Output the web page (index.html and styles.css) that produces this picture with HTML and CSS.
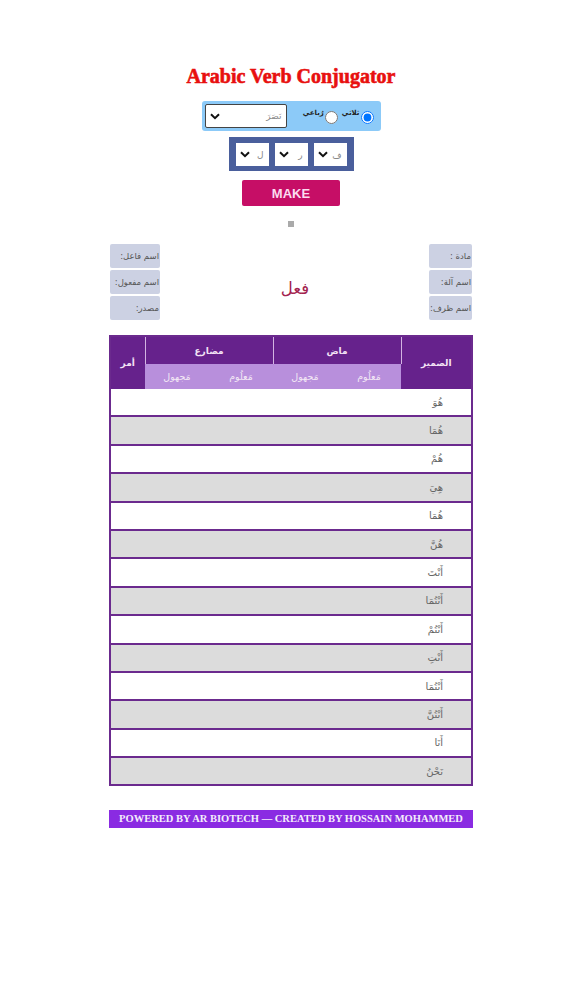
FILE: index.html
```html
<!DOCTYPE html>
<html lang="ar">
<head>
    <meta charset="UTF-8">
    <meta name="viewport" content="width=device-width, initial-scale=1.0">
    <title>Arabic Verb Conjugator</title>
    <link rel="stylesheet" href="styles.css">
</head>
<body>
    <div class="page">
        <h1 class="titre">Arabic Verb Conjugator</h1>

        <div class="bab" dir="rtl">
            <label class="choix"><input type="radio" name="nau" checked><span>ثلاثي</span></label>
            <label class="choix"><input type="radio" name="nau"><span>رُباعي</span></label>
            <select class="bab-select"><option>نَصَرَ</option></select>
        </div>

        <div class="madda" dir="rtl">
            <select class="harf"><option>ف</option></select>
            <select class="harf"><option>ر</option></select>
            <select class="harf"><option>ل</option></select>
        </div>

        <button class="make">MAKE</button>
        <div class="nuqta"></div>

        <div class="natija" dir="rtl">
            <div class="lista lista-yamin">
                <div>مادة :</div>
                <div>اسم آلة:</div>
                <div>اسم ظرف:</div>
            </div>
            <div class="fil">فعل</div>
            <div class="lista lista-yasar">
                <div>اسم فاعل:</div>
                <div>اسم مفعول:</div>
                <div>مصدر:</div>
            </div>
        </div>

        <table class="jadwal" dir="rtl">
            <colgroup>
                <col class="col-damir">
                <col class="col-fil">
                <col class="col-fil">
                <col class="col-fil">
                <col class="col-fil">
                <col class="col-amr">
            </colgroup>
            <thead>
                <tr>
                    <th rowspan="2">الضمير</th>
                    <th colspan="2" class="zaman">ماض</th>
                    <th colspan="2" class="zaman">مضارع</th>
                    <th rowspan="2">أمر</th>
                </tr>
                <tr class="naw">
                    <th>مَعلُوم</th>
                    <th>مَجهول</th>
                    <th>مَعلُوم</th>
                    <th>مَجهول</th>
                </tr>
            </thead>
            <tbody>
                <tr><td>هُوَ</td><td></td><td></td><td></td><td></td><td></td></tr>
                <tr><td>هُمَا</td><td></td><td></td><td></td><td></td><td></td></tr>
                <tr><td>هُمْ</td><td></td><td></td><td></td><td></td><td></td></tr>
                <tr><td>هِيَ</td><td></td><td></td><td></td><td></td><td></td></tr>
                <tr><td>هُمَا</td><td></td><td></td><td></td><td></td><td></td></tr>
                <tr><td>هُنَّ</td><td></td><td></td><td></td><td></td><td></td></tr>
                <tr><td>أَنْتَ</td><td></td><td></td><td></td><td></td><td></td></tr>
                <tr><td>أَنْتُمَا</td><td></td><td></td><td></td><td></td><td></td></tr>
                <tr><td>أَنْتُمْ</td><td></td><td></td><td></td><td></td><td></td></tr>
                <tr><td>أَنْتِ</td><td></td><td></td><td></td><td></td><td></td></tr>
                <tr><td>أَنْتُمَا</td><td></td><td></td><td></td><td></td><td></td></tr>
                <tr><td>أَنْتُنَّ</td><td></td><td></td><td></td><td></td><td></td></tr>
                <tr><td>أَنَا</td><td></td><td></td><td></td><td></td><td></td></tr>
                <tr><td>نَحْنُ</td><td></td><td></td><td></td><td></td><td></td></tr>
            </tbody>
        </table>

        <div class="footer">POWERED BY AR BIOTECH — CREATED BY HOSSAIN MOHAMMED</div>
    </div>
</body>
</html>
```

FILE: styles.css
```css
body {
    margin: 0;
    background-color: white;
    font-family: "DejaVu Sans", sans-serif;
}
.page {
    width: 364px;
    margin-left: 109px;
    padding-top: 65px;
    display: flex;
    flex-direction: column;
    align-items: center;
}
.titre {
    margin: 0;
    height: 22px;
    line-height: 22px;
    font-family: "Liberation Serif", serif;
    font-size: 20px;
    font-weight: bold;
    color: #e8100f;
    -webkit-text-stroke: 0.6px #e8100f;
    white-space: nowrap;
}
.bab {
    margin-top: 14px;
    width: 179px;
    height: 30px;
    box-sizing: border-box;
    padding: 3px 6px 3px 3px;
    background-color: #8ccaf8;
    border-radius: 3px;
    display: flex;
    align-items: center;
}
.choix {
    display: flex;
    align-items: center;
    font-size: 7px;
    font-weight: bold;
    color: #222;
    margin-left: 3px;
}
.choix span {
    margin-bottom: 7px;
}
.choix input {
    width: 13px;
    height: 13px;
    margin: 3px 1px 0 1px;
}
.bab-select,
.harf {
    appearance: none;
    background-color: white;
    background-image: url("data:image/svg+xml,%3Csvg xmlns='http://www.w3.org/2000/svg' viewBox='0 0 10 7'%3E%3Cpath d='M1 1.2l4 4 4-4' fill='none' stroke='%23111' stroke-width='2'/%3E%3C/svg%3E");
    background-repeat: no-repeat;
    background-size: 10px 7px;
    font-family: "DejaVu Sans", sans-serif;
    font-size: 9px;
    color: #888;
}
.bab-select {
    margin-right: auto;
    width: 82px;
    height: 24px;
    padding: 0 4px;
    background-position: 4px center;
    border: 1px solid #444;
    border-radius: 2px;
}
.madda {
    margin-top: 6px;
    width: 125px;
    height: 34px;
    box-sizing: border-box;
    padding: 6px 7px;
    background-color: #4a5f9c;
    display: flex;
    justify-content: space-between;
}
.harf {
    width: 33px;
    height: 23px;
    padding: 0 5px;
    background-position: 4px center;
    border: none;
}
.make {
    margin-top: 9px;
    width: 98px;
    height: 26px;
    background-color: #c60e66;
    color: #fbdcf0;
    font-family: "Liberation Sans", sans-serif;
    font-size: 13px;
    font-weight: bold;
    border: none;
    border-radius: 2px;
}
.nuqta {
    margin-top: 15px;
    width: 6px;
    height: 6px;
    background-color: #aaa;
}
.natija {
    margin-top: 17px;
    width: 100%;
    box-sizing: border-box;
    padding: 0 1px;
    display: flex;
    justify-content: space-between;
    align-items: center;
}
.lista {
    display: flex;
    flex-direction: column;
    gap: 2px;
}
.lista div {
    height: 24px;
    line-height: 24px;
    box-sizing: border-box;
    padding: 0 1px;
    background-color: #ccd1e3;
    border-radius: 2px;
    font-size: 8.5px;
    color: #555;
    white-space: nowrap;
    overflow: hidden;
}
.lista-yamin div {
    width: 43px;
}
.lista-yasar div {
    width: 50px;
}
.fil {
    font-size: 16.5px;
    color: #a3234f;
    margin-left: 1px;
    margin-top: 13px;
}
.jadwal {
    margin-top: 15px;
    width: 100%;
    table-layout: fixed;
    border-collapse: collapse;
    border: 2px solid #6b2a8e;
}
.col-damir {
    width: 71px;
}
.col-fil {
    width: 64px;
}
.col-amr {
    width: 35px;
}
.jadwal thead {
    background-color: #66228c;
    color: #f3e3f5;
}
.jadwal th {
    font-size: 9px;
    padding: 0;
}
.zaman {
    height: 27px;
    border-right: 1px solid #d3b4e2;
    border-left: 1px solid #d3b4e2;
}
.naw th {
    height: 25px;
    background-color: #b88fdc;
    color: #f3e8f5;
    font-weight: normal;
    font-size: 9.5px;
}
.jadwal td {
    height: 26.4px;
    padding: 0 28px 0 0;
    border-bottom: 2px solid #6b2a8e;
    font-size: 10px;
    color: #666;
    overflow: hidden;
    white-space: nowrap;
}
.jadwal tbody tr:nth-child(even) {
    background-color: #dcdcdc;
}
.footer {
    margin-top: 24px;
    width: 100%;
    height: 18px;
    line-height: 18px;
    background-color: #8a2be2;
    color: #f4ecfb;
    font-family: "Liberation Serif", serif;
    font-size: 10.5px;
    font-weight: bold;
    text-align: center;
    white-space: nowrap;
}
```
